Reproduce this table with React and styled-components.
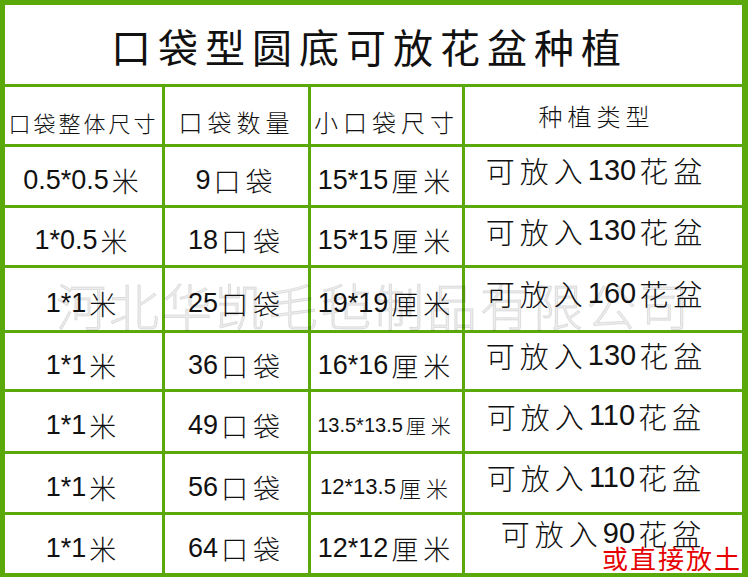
import React from 'react'
import styled, { createGlobalStyle } from 'styled-components'

const rows = [
    ['0.5*0.5米', '9口袋', '15*15厘米', '可放入130花盆'],
    ['1*0.5米', '18口袋', '15*15厘米', '可放入130花盆'],
    ['1*1米', '25口袋', '19*19厘米', '可放入160花盆'],
    ['1*1米', '36口袋', '16*16厘米', '可放入130花盆'],
    ['1*1米', '49口袋', '13.5*13.5厘米', '可放入110花盆'],
    ['1*1米', '56口袋', '12*13.5厘米', '可放入110花盆'],
    ['1*1米', '64口袋', '12*12厘米', '可放入90花盆'],
]

// smaller text where the size string is long
const sizeFont = { '13.5*13.5厘米': 20, '12*13.5厘米': 22 }

// numbers sit tight, chinese characters get the spacing
const mixed = (s) =>
    s.split(/([0-9.*]+)/).filter(Boolean).map((part, i) =>
        /^[0-9.*]+$/.test(part) ? <Num key={i}>{part}</Num> : <Han key={i}>{part}</Han>
    )

const App = () => {
    return (
        <>
            <Global />
            <Sheet>
                <Watermark>河北华凯毛毡制品有限公司</Watermark>
                <Title>口袋型圆底可放花盆种植</Title>

                <HeadCell $tight>口袋整体尺寸</HeadCell>
                <HeadCell>口袋数量</HeadCell>
                <HeadCell>小口袋尺寸</HeadCell>
                <HeadCell $wide>种植类型</HeadCell>

                {rows.map((r, i) => (
                    <React.Fragment key={i}>
                        <Cell>{mixed(r[0])}</Cell>
                        <Cell>{mixed(r[1])}</Cell>
                        <Cell $size={sizeFont[r[2]]}>{mixed(r[2])}</Cell>
                        <TypeCell $last={i === rows.length - 1}>
                            {mixed(r[3])}
                            {i === rows.length - 1 && <Note>或直接放土</Note>}
                        </TypeCell>
                    </React.Fragment>
                ))}
            </Sheet>
        </>
    )
}

const Global = createGlobalStyle`
    html, body{
        margin:0;
        padding:0;
        background:#ffffff;
    }
    body{
        width:750px;
        height:579px;
        overflow:hidden;
        font-family:"Liberation Sans", "Noto Sans CJK SC", sans-serif;
        color:#111;
    }
`

const Sheet = styled.div`
    position: relative;
    width:748px;
    height:577px;
    box-sizing:border-box;
    background-color:#5ba80b;
    padding:5px 6px 4px 5px;
    display:grid;
    grid-template-columns:157px 143px 151px 277px;
    grid-template-rows:79px 57px 58px 57px 62px 56px 59px 58px 58px;
    gap:3px;
`

const Watermark = styled.div`
    position:absolute;
    top:268px;
    left:0;
    right:0;
    text-align:center;
    font-family:"Noto Sans CJK SC", sans-serif;
    font-size:50px;
    font-weight:300;
    letter-spacing:3px;
    color:rgba(0,0,0,.07);
    -webkit-text-stroke:1px rgba(0,0,0,.1);
    pointer-events:none;
    z-index:2;
    white-space:nowrap;
`

const Title = styled.div`
    grid-column:1 / -1;
    background:#fff;
    display:flex;
    align-items:center;
    justify-content:center;
    font-family:"Noto Sans CJK SC", sans-serif;
    font-size:40px;
    font-weight:400;
    letter-spacing:7px;
    padding-top:2px;
    padding-right:8px;
`

const HeadCell = styled.div`
    background:#fff;
    display:flex;
    align-items:center;
    justify-content:center;
    font-family:"Noto Sans CJK SC", sans-serif;
    font-size:${({ $tight }) => $tight ? '22px' : '24px'};
    font-weight:300;
    letter-spacing:${({ $tight }) => $tight ? '3px' : '5px'};
    padding-top:${({ $wide }) => $wide ? '0' : '12px'};
    padding-right:${({ $wide }) => $wide ? '14px' : '0'};
    white-space:nowrap;
    overflow:hidden;
`

const Num = styled.span`
    font-family:"Liberation Sans", sans-serif;
    letter-spacing:0;
    margin-right:3px;
`

const Han = styled.span`
    font-family:"Noto Sans CJK SC", sans-serif;
    font-weight:300;
    letter-spacing:5px;
`

const Cell = styled.div`
    background:#fff;
    display:flex;
    align-items:center;
    justify-content:center;
    font-size:${({ $size }) => $size || 27}px;
    padding-top:8px;
    white-space:nowrap;
`

const TypeCell = styled.div`
    position:relative;
    background:#fff;
    display:flex;
    align-items:center;
    justify-content:center;
    font-size:29px;
    padding-bottom:${({ $last }) => $last ? '22px' : '12px'};
    padding-right:${({ $last }) => $last ? '0' : '14px'};
    white-space:nowrap;
`

const Note = styled.span`
    position:absolute;
    right:0;
    bottom:2px;
    font-family:"Noto Sans CJK SC", sans-serif;
    font-size:26px;
    letter-spacing:2px;
    color:#e60000;
    line-height:1;
`

export default App
